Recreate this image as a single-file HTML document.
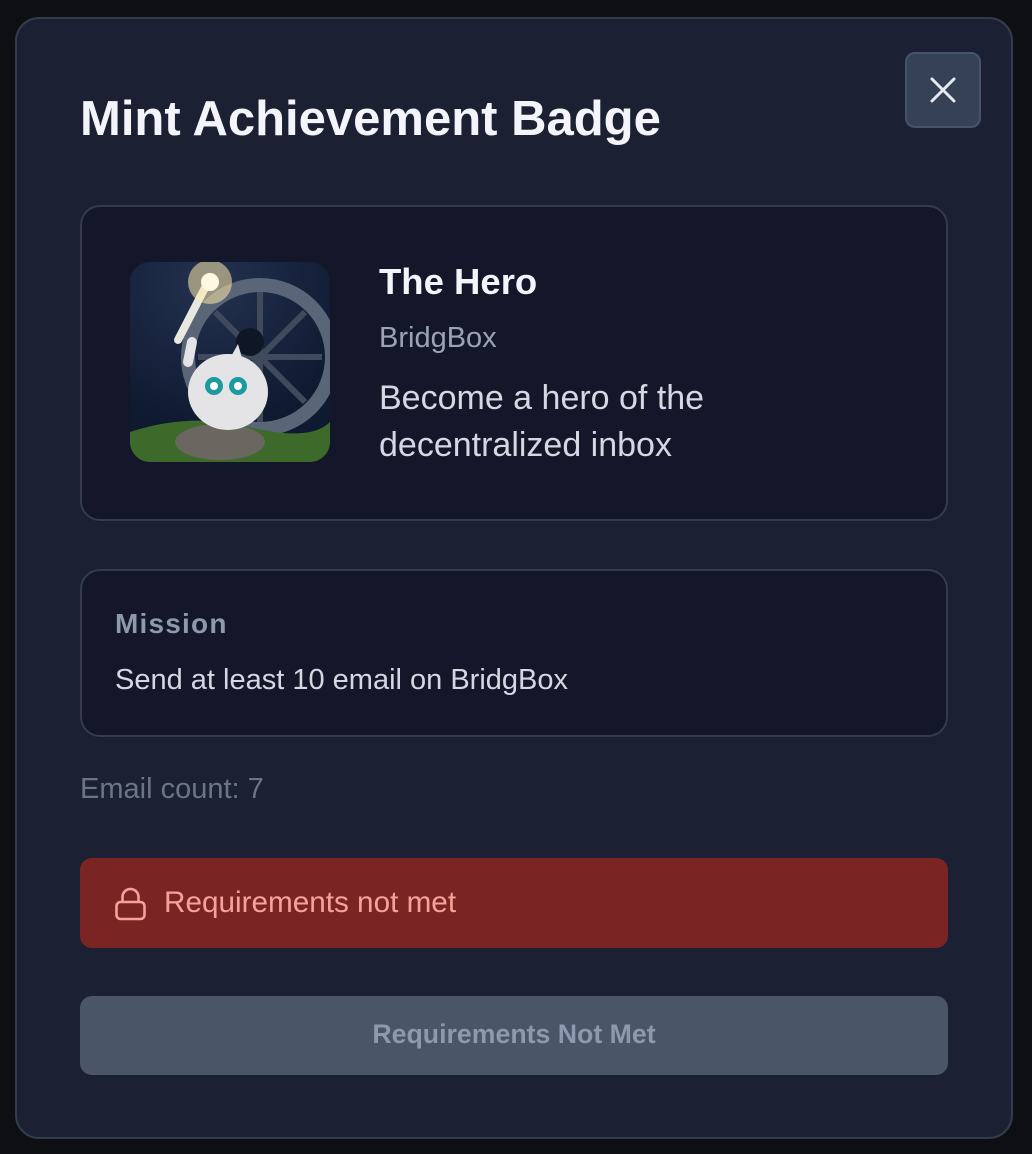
<!DOCTYPE html>
<html><head><meta charset="utf-8"><style>
*{margin:0;padding:0;box-sizing:border-box}
body{width:1032px;height:1154px;background:#0d0f13;font-family:"Liberation Sans",sans-serif;position:relative;overflow:hidden}
.modal{position:absolute;left:15px;top:17px;width:998px;height:1122px;background:#1b2033;border:2px solid #333c4d;border-radius:24px}
.abs{position:absolute}
.close{left:888px;top:33px;width:76px;height:76px;background:#354256;border:2px solid #46536a;border-radius:10px}
h1{position:absolute;left:63px;top:72px;font-size:49px;font-weight:bold;color:#f3f5fa}
.card{position:absolute;background:#131729;border:2px solid #333c4d;border-radius:20px}
.img{left:113px;top:243px;width:200px;height:200px;border-radius:20px;overflow:hidden;background:radial-gradient(circle at 40% 10%,#233250,#0f1930 70%)}
.t{position:absolute;white-space:nowrap}
</style></head><body>
<div class="modal">
  <div class="abs close"><svg width="76" height="76" viewBox="0 0 76 76" style="position:absolute;left:-2px;top:-2px"><path d="M27 27L49 49M49 27L27 49" stroke="#e6e9f0" stroke-width="3" stroke-linecap="round"/></svg></div>
  <h1>Mint Achievement Badge</h1>
  <div class="card" style="left:63px;top:186px;width:868px;height:316px"></div>
  <div class="abs img">
    <svg width="200" height="200" viewBox="0 0 200 200">
      <circle cx="130" cy="95" r="72" fill="none" stroke="#5a6578" stroke-width="14"/>
      <path d="M130 30V160M68 95H192M85 50L175 140M175 50L85 140" stroke="#3f4a5c" stroke-width="6"/>
      <circle cx="120" cy="80" r="14" fill="#0f1626"/>
      <path d="M0 170Q60 150 120 165T200 160V200H0Z" fill="#3d6a2a"/>
      <ellipse cx="90" cy="180" rx="45" ry="18" fill="#6a6660"/>
      <path d="M78 20L48 78" stroke="#e8e8e0" stroke-width="8" stroke-linecap="round"/>
      <circle cx="80" cy="20" r="22" fill="#ffe9a8" opacity="0.55"/>
      <circle cx="80" cy="20" r="9" fill="#fff8e0"/>
      <ellipse cx="98" cy="130" rx="40" ry="38" fill="#e4e4e6"/>
      <path d="M98 100L108 82L116 110Z" fill="#e4e4e6"/>
      <circle cx="84" cy="124" r="9" fill="#1d9aa0"/><circle cx="108" cy="124" r="9" fill="#1d9aa0"/>
      <circle cx="84" cy="124" r="4" fill="#fff"/><circle cx="108" cy="124" r="4" fill="#fff"/>
      <path d="M58 100L62 80" stroke="#e4e4e6" stroke-width="10" stroke-linecap="round"/>
    </svg>
  </div>
  <div class="t" style="left:362px;top:242px;font-size:36.5px;font-weight:bold;color:#f3f5fa">The Hero</div>
  <div class="t" style="left:362px;top:303px;font-size:29px;color:#9aa4b6">BridgBox</div>
  <div class="t" style="left:362px;top:356px;font-size:34px;color:#d3d8e2;line-height:47px;white-space:normal;width:420px">Become a hero of the decentralized inbox</div>
  <div class="card" style="left:63px;top:550px;width:868px;height:168px"></div>
  <div class="t" style="left:98px;top:589px;font-size:28px;font-weight:bold;color:#8e99ad;letter-spacing:1.2px">Mission</div>
  <div class="t" style="left:98px;top:645px;font-size:29px;color:#d3d8e2">Send at least 10 email on BridgBox</div>
  <div class="t" style="left:63px;top:754px;font-size:29px;color:#6b7587">Email count: 7</div>
  <div class="abs" style="left:63px;top:839px;width:868px;height:90px;background:#7a2523;border-radius:12px"></div>
  <svg class="abs" style="left:97px;top:868px" width="34" height="34" viewBox="0 0 34 34"><rect x="2.5" y="15" width="28" height="17" rx="4" fill="none" stroke="#f3a39a" stroke-width="2.6"/><path d="M8.5 15V10a8 8 0 0 1 16 0v5" fill="none" stroke="#f3a39a" stroke-width="2.6"/></svg>
  <div class="t" style="left:147px;top:867px;font-size:29.7px;color:#f3a39a">Requirements not met</div>
  <div class="abs" style="left:63px;top:977px;width:868px;height:79px;background:#4a5567;border-radius:12px"></div>
  <div class="t" style="left:63px;top:1000px;width:868px;text-align:center;font-size:26.7px;font-weight:bold;color:#8e99ad">Requirements Not Met</div>
</div>
</body></html>
